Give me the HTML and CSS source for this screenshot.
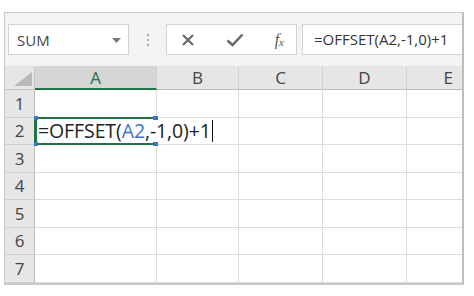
FILE: index.html
```html
<!DOCTYPE html>
<html>
<head>
<meta charset="utf-8">
<link rel="stylesheet" href="styles.css">
</head>
<body>
<div class="frame">
  <div class="toolbar">
    <div class="namebox">
      <span class="name">SUM</span>
      <svg class="caret" width="9" height="5" viewBox="0 0 9 5"><path d="M0 0 H9 L4.5 5 Z" fill="#777"/></svg>
    </div>
    <div class="dots"><i></i><i></i><i></i></div>
    <div class="fxbox">
      <svg class="ico" width="14" height="14" viewBox="0 0 14 14"><path d="M2 2 L12 12 M12 2 L2 12" stroke="#666" stroke-width="2" fill="none"/></svg>
      <svg class="ico" width="18" height="14" viewBox="0 0 18 14"><path d="M1.5 7.5 L6.5 12 L16.5 1.5" stroke="#666" stroke-width="2.4" fill="none"/></svg>
      <span class="fx">f<sub>x</sub></span>
    </div>
    <div class="formula">=OFFSET(A2,-1,0)+1</div>
  </div>
  <div class="sheet">
    <div class="corner"><svg width="18" height="14" viewBox="0 0 18 14"><path d="M18 0 V14 H0 Z" fill="#b9b9b9"/></svg></div>
    <div class="ch sel">A</div>
    <div class="ch">B</div>
    <div class="ch">C</div>
    <div class="ch">D</div>
    <div class="ch last">E</div>

    <div class="rh">1</div><div class="c"></div><div class="c"></div><div class="c"></div><div class="c"></div><div class="c last"></div>
    <div class="rh">2</div>
    <div class="c edit">
      <span class="txt">=OFFSET(<span class="ref">A2</span>,-1,0)+1</span><span class="cursor"></span>
      <i class="h tl"></i><i class="h bl"></i><i class="h tr"></i><i class="h br"></i>
    </div>
    <div class="c"></div><div class="c"></div><div class="c"></div><div class="c last"></div>
    <div class="rh">3</div><div class="c"></div><div class="c"></div><div class="c"></div><div class="c"></div><div class="c last"></div>
    <div class="rh">4</div><div class="c"></div><div class="c"></div><div class="c"></div><div class="c"></div><div class="c last"></div>
    <div class="rh">5</div><div class="c"></div><div class="c"></div><div class="c"></div><div class="c"></div><div class="c last"></div>
    <div class="rh">6</div><div class="c"></div><div class="c"></div><div class="c"></div><div class="c"></div><div class="c last"></div>
    <div class="rh">7</div><div class="c"></div><div class="c"></div><div class="c"></div><div class="c"></div><div class="c last"></div>
  </div>
</div>
</body>
</html>
```
FILE: styles.css
```css
html, body {
  margin: 0;
  padding: 0;
  background: #fff;
}
body {
  font-family: "Open Sans", "Liberation Sans", sans-serif;
  color: #333;
}
.frame {
  margin: 12px 0 0 4px;
  width: 460px;
  border: 1px solid #c8c8c8;
  border-right: 2px solid #bdbdbd;
  border-bottom: 2px solid #c8c8c8;
  background: #f3f3f3;
  box-sizing: border-box;
}
.toolbar {
  height: 53px;
  display: flex;
  align-items: center;
  padding: 0 0 0 3px;
  box-sizing: border-box;
}
.namebox {
  width: 121px;
  height: 31px;
  box-sizing: border-box;
  background: #fff;
  border: 1px solid #d2d2d2;
  display: flex;
  align-items: center;
  justify-content: space-between;
  padding: 0 7px 0 8px;
}
.name {
  font-size: 15px;
  color: #444;
}
.caret { margin-top: 1px; }
.dots {
  width: 37px;
  display: flex;
  flex-direction: column;
  align-items: center;
  gap: 3px;
}
.dots i {
  display: block;
  width: 2px;
  height: 2px;
  background: #a8a8a8;
}
.fxbox {
  width: 131px;
  height: 31px;
  box-sizing: border-box;
  background: #fff;
  border: 1px solid #d2d2d2;
  display: flex;
  align-items: center;
  justify-content: space-between;
  padding: 0 12px 0 14px;
}
.fx {
  font-family: "Liberation Serif", serif;
  font-style: italic;
  font-size: 16px;
  color: #555;
}
.fx sub {
  font-size: 11px;
  vertical-align: -1px;
}
.formula {
  flex: 1;
  margin-left: 5px;
  height: 31px;
  box-sizing: border-box;
  background: #fff;
  border: 1px solid #d2d2d2;
  border-right: none;
  font-size: 15px;
  line-height: 29px;
  padding-left: 11px;
  color: #333;
  white-space: nowrap;
  overflow: hidden;
}
.sheet {
  display: grid;
  grid-template-columns: 30px 122px 82px 84px 84px 1fr;
  grid-template-rows: 24px repeat(7, 27.5px);
  background: #fff;
}
.corner {
  background: #e6e6e6;
  border-right: 1px solid #c6c6c6;
  border-bottom: 1px solid #c6c6c6;
  display: flex;
  align-items: flex-end;
  justify-content: flex-end;
  padding: 0 2px 3px 0;
}
.ch {
  background: #e6e6e6;
  border-right: 1px solid #d0d0d0;
  border-bottom: 1px solid #bcbcbc;
  display: flex;
  align-items: center;
  justify-content: center;
  font-size: 17px;
  color: #444;
}
.ch.sel {
  background: #d6d6d6;
  color: #217346;
  border-bottom: 2px solid #217346;
}
.ch.last { border-right: none; justify-content: flex-end; padding-right: 9px; }
.rh {
  background: #e6e6e6;
  border-right: 1px solid #bcbcbc;
  border-bottom: 1px solid #d0d0d0;
  display: flex;
  align-items: center;
  justify-content: center;
  font-size: 17px;
  color: #444;
}
.c {
  border-right: 1px solid #dcdcdc;
  border-bottom: 1px solid #dcdcdc;
}
.c.last { border-right: none; }
.edit {
  position: relative;
  border-top: 2px solid #217346;
  border-bottom: 2px solid #217346;
  border-left: 3px solid #217346;
  border-right: none;
  margin: -1px 0 0 -1px;
  display: flex;
  align-items: center;
  padding-left: 1px;
  white-space: nowrap;
  z-index: 2;
}
.txt {
  flex-shrink: 0;
  font-size: 19.5px;
  color: #222;
  letter-spacing: -0.1px;
}
.ref { color: #3c73c8; }
.cursor {
  flex-shrink: 0;
  display: block;
  width: 1px;
  height: 22px;
  background: #111;
  margin-left: 1px;
}
.h {
  position: absolute;
  width: 5px;
  height: 4px;
  background: #3c73c8;
}
.h.tl { left: -3px; top: -3px; width: 4px; }
.h.bl { left: -3px; bottom: -3px; width: 4px; }
.h.tr { left: 116px; top: -3px; }
.h.br { left: 116px; bottom: -3px; }
```
